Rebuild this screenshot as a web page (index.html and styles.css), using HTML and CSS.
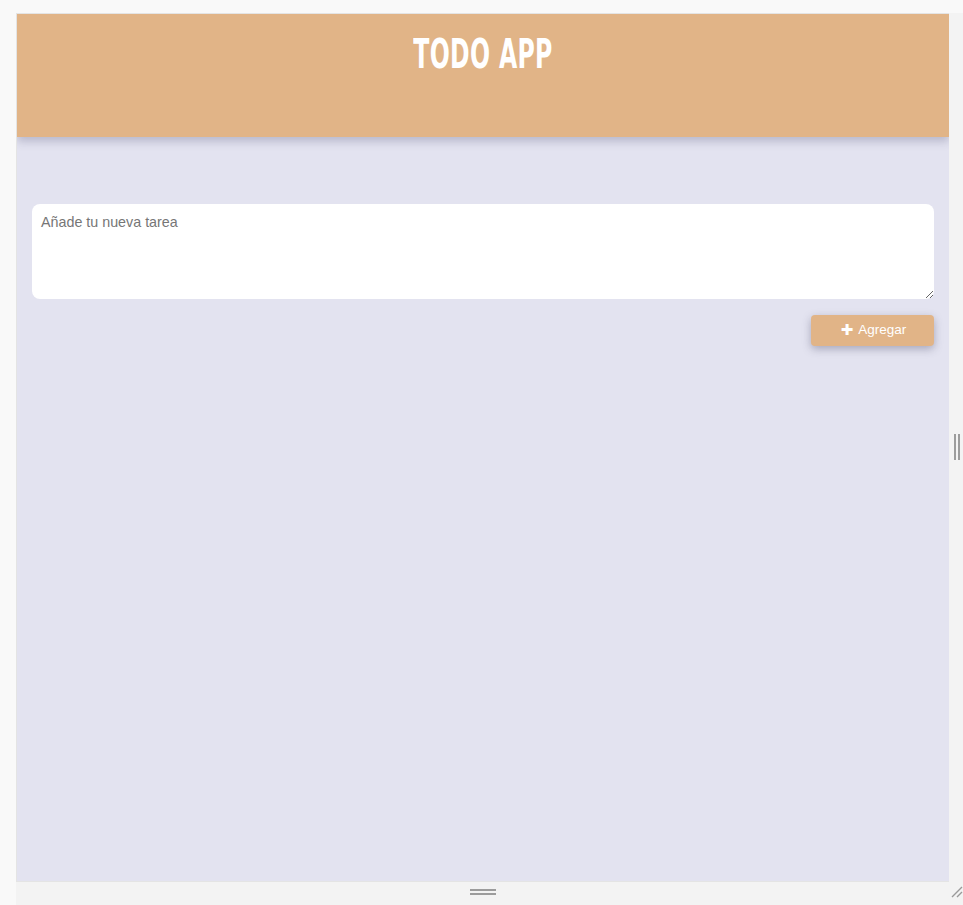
FILE: index.html
```html
<!DOCTYPE html>
<html lang="es">
<head>
<meta charset="utf-8">
<title>Todo App</title>
<link rel="stylesheet" href="styles.css">
</head>
<body>
<div class="stage">
  <div class="row">
    <div class="preview">
      <header class="app-header">
        <h1 class="title">TODO APP</h1>
      </header>
      <main class="content">
        <textarea class="task-input" placeholder="Añade tu nueva tarea"></textarea>
        <div class="actions">
          <button class="add-btn" type="button"><span class="plus">✚</span> Agregar</button>
        </div>
      </main>
    </div>
    <div class="gutter-right"><span class="handle-v"></span></div>
  </div>
  <div class="gutter-bottom">
    <span class="handle-h"></span>
    <svg class="corner" width="12" height="12" viewBox="0 0 12 12"><path d="M1 11 L11 1 M6 11 L11 6" stroke="#9a9a9a" stroke-width="1.4" fill="none"/></svg>
  </div>
</div>
</body>
</html>
```
FILE: styles.css
```css
html, body {
  margin: 0;
  padding: 0;
  background: #f9f9f9;
  font-family: "Liberation Sans", Arial, sans-serif;
}
.stage {
  padding: 13px 0 0 16px;
  height: 905px;
  box-sizing: border-box;
}
.row {
  display: flex;
}
.preview {
  width: 932px;
  height: 867px;
  border: 1px solid #e4e4e4;
  border-right: none;
  background: #e3e3f0;
  display: flex;
  flex-direction: column;
  overflow: hidden;
}
.app-header {
  height: 123px;
  background: #e1b487;
  box-shadow: 0 4px 9px rgba(60, 60, 100, 0.28);
  position: relative;
  z-index: 1;
  display: flex;
  justify-content: center;
}
.title {
  margin: 15px 0 0;
  color: #fff;
  font-family: "Liberation Sans Narrow", "DejaVu Sans Condensed", sans-serif;
  font-weight: bold;
  font-size: 41px;
  line-height: 50px;
  letter-spacing: 0.5px;
  transform: scaleX(0.64);
}
.content {
  padding: 67px 15px 0;
  display: flex;
  flex-direction: column;
}
.task-input {
  height: 95px;
  box-sizing: border-box;
  border: none;
  border-radius: 8px;
  background: #fff;
  padding: 10px 9px 9px;
  font-family: "Liberation Sans", Arial, sans-serif;
  font-size: 14.3px;
  color: #333;
  outline: none;
}
.task-input::placeholder {
  color: #767676;
}
.actions {
  display: flex;
  justify-content: flex-end;
  margin-top: 16px;
}
.add-btn {
  width: 123px;
  height: 31px;
  border: none;
  border-radius: 4px;
  background: #e1b487;
  color: #fff;
  font-family: "Liberation Sans", Arial, sans-serif;
  font-size: 13.5px;
  box-shadow: 0 3px 8px rgba(70, 70, 100, 0.38);
  display: flex;
  align-items: center;
  justify-content: center;
  gap: 3px;
  padding: 0 0 2px 2px;
}
.plus {
  font-size: 15px;
  font-family: "DejaVu Sans", sans-serif;
  font-weight: bold;
  margin-right: 2px;
}
.gutter-right {
  width: 14px;
  height: 869px;
  background: #f3f3f3;
  display: flex;
  align-items: center;
  justify-content: center;
}
.handle-v {
  width: 2px;
  height: 26px;
  border-left: 2px solid #9c9c9c;
  border-right: 2px solid #9c9c9c;
  margin-left: 1px;
  margin-top: -1px;
  box-sizing: content-box;
}
.gutter-bottom {
  width: 947px;
  height: 23px;
  background: #f3f3f3;
  position: relative;
  display: flex;
  justify-content: center;
  align-items: center;
}
.handle-h {
  width: 26px;
  height: 2px;
  border-top: 2px solid #9c9c9c;
  border-bottom: 2px solid #9c9c9c;
  box-sizing: content-box;
  margin-left: -14px;
  margin-top: -3px;
}
.corner {
  position: absolute;
  right: 0;
  bottom: 7px;
}
```
